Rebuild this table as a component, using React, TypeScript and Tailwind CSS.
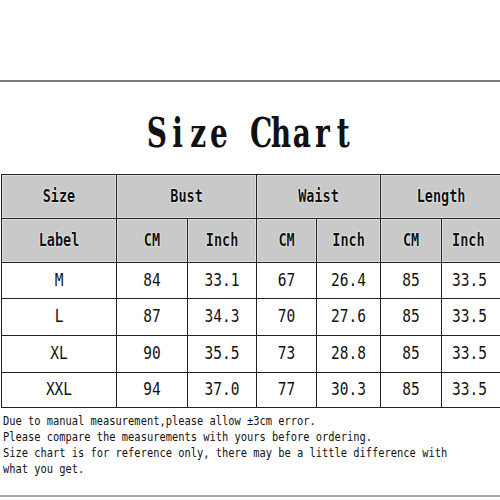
const rows = [
  ["M", "84", "33.1", "67", "26.4", "85", "33.5"],
  ["L", "87", "34.3", "70", "27.6", "85", "33.5"],
  ["XL", "90", "35.5", "73", "28.8", "85", "33.5"],
  ["XXL", "94", "37.0", "77", "30.3", "85", "33.5"],
];

const rowHeights = ["h-[36px]", "h-[37px]", "h-[37px]", "h-[35px]"];

const notes = [
  "Due to manual measurement,please allow ±3cm error.",
  "Please compare the measurements with yours before ordering.",
  "Size chart is for reference only, there may be a little difference with",
  "what you get.",
];

function Tall({ children, className = "" }: { children: React.ReactNode; className?: string }) {
  return <span className={`inline-block scale-y-[1.25] ${className}`}>{children}</span>;
}

// typewriter-style title: slab serif glyphs set on a fixed pitch
function Title({ text }: { text: string }) {
  return (
    <h1 className="flex scale-y-[1.45] font-['DejaVu_Serif',serif] font-bold text-[28px] text-[#111] leading-none mt-[12px]">
      {text.split("").map((c, i) => (
        <span key={i} className="inline-block w-[20.7px] text-center">
          {c === " " ? "\u00a0" : c}
        </span>
      ))}
    </h1>
  );
}

export default function App() {
  const head = "bg-[#c9c9c9] border border-[#222] text-center font-bold text-[13.5px] text-[#111] [text-shadow:0_0_2px_#fff,0_0_1px_#fff] shadow-[inset_0_0_0_1px_#dedede]";
  const cell = "border border-[#222] text-center text-[14.5px] text-[#111]";

  return (
    <div className="w-[500px] h-[500px] bg-white overflow-hidden pt-[80px] font-['DejaVu_Sans_Mono',monospace]">
      <div className="border-t-2 border-[#7a7a7a]">
        {/* Title */}
        <div className="h-[92px] flex items-center justify-center">
          <Title text="Size Chart" />
        </div>

        {/* Table */}
        <div className="pl-px">
          <table className="border-collapse table-fixed w-[520px]">
            <colgroup>
              <col className="w-[115px]" />
              <col className="w-[71px]" />
              <col className="w-[69px]" />
              <col className="w-[60px]" />
              <col className="w-[64px]" />
              <col className="w-[61px]" />
              <col className="w-[80px]" />
            </colgroup>
            <thead>
              <tr className="h-[44px]">
                <th className={head}><Tall>Size</Tall></th>
                <th className={head} colSpan={2}><Tall>Bust</Tall></th>
                <th className={head} colSpan={2}><Tall>Waist</Tall></th>
                <th className={head} colSpan={2}><Tall className="-translate-x-[10px]">Length</Tall></th>
              </tr>
              <tr className="h-[44px]">
                <th className={head}><Tall>Label</Tall></th>
                <th className={head}><Tall>CM</Tall></th>
                <th className={head}><Tall>Inch</Tall></th>
                <th className={head}><Tall>CM</Tall></th>
                <th className={head}><Tall>Inch</Tall></th>
                <th className={head}><Tall>CM</Tall></th>
                <th className={`${head} text-left pl-[10px]`}><Tall>Inch</Tall></th>
              </tr>
            </thead>
            <tbody>
              {rows.map((r, i) => (
                <tr key={r[0]} className={rowHeights[i]}>
                  {r.map((v, j) => (
                    <td key={j} className={j === 6 ? `${cell} text-left pl-[10px]` : cell}>
                      <Tall>{v}</Tall>
                    </td>
                  ))}
                </tr>
              ))}
            </tbody>
          </table>
        </div>

        {/* Notes */}
        <div className="pt-[4px] pl-[3px] text-[10.4px] leading-[16px] text-[#111]">
          {notes.map((n) => (
            <div key={n}>
              <Tall className="whitespace-pre">{n}</Tall>
            </div>
          ))}
        </div>

        <div className="mt-[19px] border-t-2 border-[#a8a8a8]" />
      </div>
    </div>
  );
}
